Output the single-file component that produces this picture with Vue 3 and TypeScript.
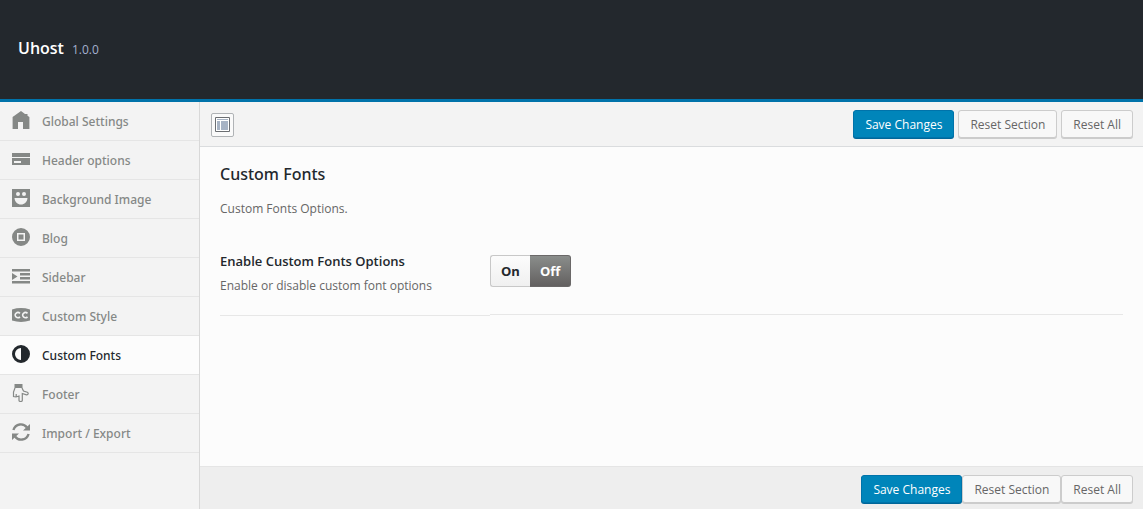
<script setup lang="ts">
import { ref } from 'vue'

interface Section {
  id: string
  label: string
}

const sections: Section[] = [
  { id: 'home', label: 'Global Settings' },
  { id: 'card', label: 'Header options' },
  { id: 'smile', label: 'Background Image' },
  { id: 'blog', label: 'Blog' },
  { id: 'indent', label: 'Sidebar' },
  { id: 'cc', label: 'Custom Style' },
  { id: 'adjust', label: 'Custom Fonts' },
  { id: 'hand', label: 'Footer' },
  { id: 'refresh', label: 'Import / Export' },
]

const active = ref('adjust')
const enabled = ref(false)
</script>

<template>
  <div class="panel">
    <header class="header">
      <h1>Uhost</h1>
      <span class="version">1.0.0</span>
    </header>

    <div class="body">
      <nav class="sidebar" aria-label="Sections">
        <a
          v-for="s in sections"
          :key="s.id"
          href="#"
          class="item"
          :class="{ active: s.id === active }"
          @click.prevent="active = s.id"
        >
          <svg class="icon" viewBox="0 0 18 18" aria-hidden="true">
            <path v-if="s.id === 'home'" d="M9 0 .6 6V18H6v-7h5v7h6.400V6L15.500 4.700V3H13Z" />
            <path v-else-if="s.id === 'card'" fill-rule="evenodd" d="M0 3h18v4H0ZM0 8h18v7H0ZM2 11v2h7v-2Z" />
            <path
              v-else-if="s.id === 'smile'"
              fill-rule="evenodd"
              d="M0 0h18v18H0ZM6 3a2 2 0 1 0 0 4 2 2 0 0 0 0-4ZM12 3a2 2 0 1 0 0 4 2 2 0 0 0 0-4ZM2.500 9c.3 4 3 6.500 6.500 6.500S15.200 13 15.500 9Z"
            />
            <path
              v-else-if="s.id === 'blog'"
              fill-rule="evenodd"
              d="M9 0a9 9 0 1 0 0 18A9 9 0 0 0 9 0ZM5 5h8v8H5ZM6.500 6.500v5h5v-5Z"
            />
            <path
              v-else-if="s.id === 'indent'"
              d="M0 2h18v2.500H0ZM8 6h10v2.500H8ZM8 10h10v2.500H8ZM0 14h18v2.500H0ZM0 6l5.500 3.500L0 13Z"
            />
            <template v-else-if="s.id === 'cc'">
              <path d="M0 3.500Q9 .6 18 3.500v11Q9 17.400 0 14.500Z" />
              <path class="cut" d="M8 7.400A2.800 2.500 0 1 0 8 10.800M15.500 7.400A2.800 2.500 0 1 0 15.500 10.800" />
            </template>
            <path
              v-else-if="s.id === 'adjust'"
              fill-rule="evenodd"
              d="M9 0a9 9 0 1 0 0 18A9 9 0 0 0 9 0ZM9 3v12A6 6 0 0 1 9 3Z"
            />
            <template v-else-if="s.id === 'hand'">
              <path d="M2.500 0h8v4h-8Z" />
              <path
                class="line"
                d="M3 4 1.500 8v4.500L4 13l3-1v4.500c0 1.300 3.300 1.300 3.300 0V9.500L14.500 10.800c1.900.2 2.200-1.700.8-2.500L11.500 7 10 4M4.200 13v-3"
              />
            </template>
            <template v-else>
              <path class="arc" d="M1.400 7C3.500.3 11.500-.3 15 4.500M16.600 11C14.500 17.700 6.500 18.300 3 13.500" />
              <path d="M18 1v6.500h-7ZM0 17v-6.500h7Z" />
            </template>
          </svg>
          <span>{{ s.label }}</span>
        </a>
      </nav>

      <main class="main">
        <div class="bar top">
          <button class="expand" type="button" aria-label="Expand all sections">
            <svg viewBox="0 0 15 15" aria-hidden="true">
              <path class="frame" d="M.5.5h14v14H.5Z" />
              <path class="fill" d="M2 2h11v1H2ZM2 4h3v9H2ZM6 4h7v9H6Z" />
            </svg>
          </button>
          <div class="actions">
            <button class="btn primary" type="button">Save Changes</button>
            <button class="btn" type="button">Reset Section</button>
            <button class="btn" type="button">Reset All</button>
          </div>
        </div>

        <section class="content">
          <h2>Custom Fonts</h2>
          <p class="intro">Custom Fonts Options.</p>
          <div class="field">
            <div class="label">
              <h3 id="fonts-title">Enable Custom Fonts Options</h3>
              <p>Enable or disable custom font options</p>
            </div>
            <div class="control">
              <div class="switch" role="group" aria-labelledby="fonts-title">
                <button type="button" :class="{ selected: enabled }" :aria-pressed="enabled" @click="enabled = true">On</button>
                <button type="button" :class="{ selected: !enabled }" :aria-pressed="!enabled" @click="enabled = false">Off</button>
              </div>
            </div>
          </div>
        </section>

        <div class="bar bottom">
          <div class="actions tight">
            <button class="btn primary" type="button">Save Changes</button>
            <button class="btn" type="button">Reset Section</button>
            <button class="btn" type="button">Reset All</button>
          </div>
        </div>
      </main>
    </div>
  </div>
</template>

<style>
body {
  background: #f3f3f3;
}
</style>

<style scoped>
.panel {
  display: flex;
  flex-direction: column;
  min-height: 100vh;
  font-family: "Segoe UI", "Open Sans", "Noto Sans", sans-serif;
  font-size: 12px;
  line-height: 22px;
  color: #666;
}
h1, h2, h3, p {
  margin: 0;
}
button {
  font: inherit;
  cursor: pointer;
}
.header {
  display: flex;
  align-items: baseline;
  gap: 8px;
  padding: 36px 18px 38px;
  background: #23282d;
  border-bottom: 3px solid #0073aa;
}
h1 {
  font-size: 16px;
  line-height: 24px;
  font-weight: 600;
  color: #fff;
}
.version {
  color: #a3b1cf;
}
.body {
  display: flex;
  flex: 1;
}
.sidebar {
  flex: 0 0 199px;
  border-right: 1px solid #d8d8d8;
  background: #f3f3f3;
}
.item {
  display: flex;
  align-items: flex-start;
  gap: 12px;
  padding: 9px 12px 7px;
  border-bottom: 1px solid #e5e5e5;
  color: #858886;
  font-family: "Segoe UI", "Noto Sans", "Open Sans", sans-serif;
  font-weight: 500;
  text-decoration: none;
}
.item.active {
  background: #fcfcfc;
  color: #23282d;
}
.icon {
  width: 18px;
  height: 18px;
  fill: currentColor;
}
.icon .cut {
  fill: none;
  stroke: #f3f3f3;
  stroke-width: 1.6;
}
.icon .line {
  fill: none;
  stroke: currentColor;
  stroke-width: 1.2;
}
.icon .arc {
  fill: none;
  stroke: currentColor;
  stroke-width: 2.4;
}
.main {
  display: flex;
  flex: 1;
  flex-direction: column;
  min-width: 0;
  background: #fcfcfc;
}
.bar {
  display: flex;
  align-items: center;
  padding: 8px 10px 7px;
}
.top {
  background: #f3f3f3;
  border-bottom: 1px solid #dadcde;
}
.bottom {
  padding-bottom: 5px;
  background: #eee;
  border-top: 1px solid #e5e5e5;
}
.expand {
  display: grid;
  place-items: center;
  width: 23px;
  height: 24px;
  padding: 0;
  margin-left: 1px;
  border: 1px solid #b0b3b6;
  border-radius: 2px;
  background: #fafafa;
}
.expand svg {
  width: 15px;
  height: 15px;
}
.frame {
  fill: #fff;
  stroke: #6b6e72;
}
.fill {
  fill: #a7b3c4;
}
.actions {
  display: flex;
  gap: 4px;
  margin-left: auto;
}
.tight {
  gap: 0;
}
.btn {
  height: 28px;
  margin: 0 0 1px;
  padding: 2px 11px 0;
  border: 1px solid #ccc;
  border-radius: 3px;
  background: #f8f8f8;
  box-shadow: 0 1px 0 #ccc;
  color: #666;
  line-height: 24px;
  white-space: nowrap;
}
.btn.primary {
  border-color: #0073aa;
  background: #0085ba;
  box-shadow: 0 1px 0 #006799;
  color: #fff;
}
.content {
  flex: 1;
  padding: 15px 20px;
}
h2 {
  font-family: "Segoe UI", "Noto Sans", "Open Sans", sans-serif;
  font-size: 16px;
  line-height: 24px;
  font-weight: 500;
  color: #23282d;
}
.intro {
  margin-top: 12px;
}
.field {
  display: grid;
  grid-template-columns: 270px 1fr;
  align-items: start;
  margin-top: 31px;
}
.label {
  padding-bottom: 18px;
  border-bottom: 1px solid #e7e7e7;
}
h3 {
  font-size: 13px;
  line-height: 20px;
  font-weight: 600;
  color: #23282d;
}
.label p {
  margin-top: 4px;
}
.control {
  padding: 4px 0 27px;
  border-bottom: 1px solid #e7e7e7;
}
.switch {
  display: flex;
}
.switch button {
  height: 32px;
  padding: 0 10px;
  border: 1px solid #c8c8c8;
  border-right: 0;
  border-radius: 3px 0 0 3px;
  background: linear-gradient(#fcfcfc, #f0f0f0);
  color: #23282d;
  font-size: 13px;
  font-weight: 700;
}
.switch button + button {
  border: 1px solid #c8c8c8;
  border-left: 0;
  border-radius: 0 3px 3px 0;
}
.switch button.selected {
  border-color: #6a6868;
  background: linear-gradient(#8a8d8b, #636060);
  color: #fff;
}
</style>
